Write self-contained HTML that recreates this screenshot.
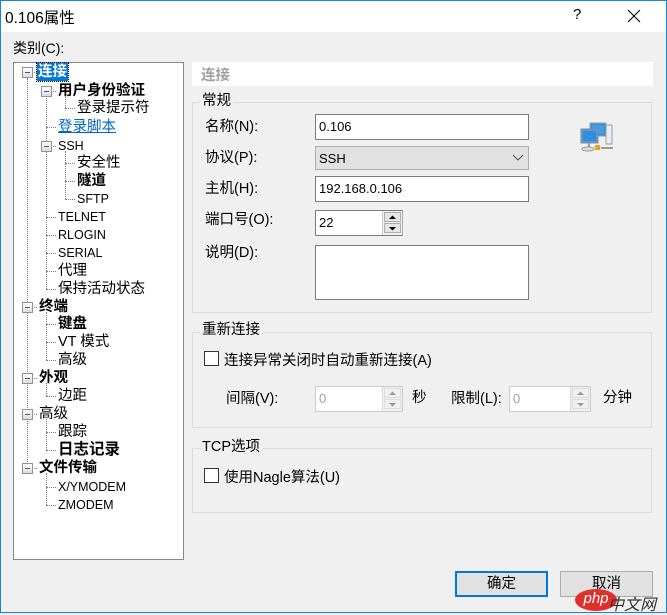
<!DOCTYPE html>
<html><head><meta charset="utf-8"><style>
*{margin:0;padding:0;box-sizing:border-box}
body{width:667px;height:613px;overflow:hidden;background:#f0f0f0;font-family:"Liberation Sans","Noto Sans CJK SC",sans-serif;font-size:14.5px;color:#000;position:relative}
.a{position:absolute;white-space:nowrap}
.t{position:absolute;white-space:nowrap;line-height:18px;height:18px}
.b{font-weight:bold}
.vl{position:absolute;width:0;border-left:1px dotted #808080}
.hl{position:absolute;height:0;border-top:1px dotted #808080}
.box{position:absolute;width:11px;height:11px;border:1px solid #919191;background:linear-gradient(#fff,#dcdcdc)}
.box:after{content:"";position:absolute;left:2px;top:4px;width:5px;height:1px;background:#3a5a9a}
.inp{position:absolute;background:#fff;border:1px solid #7a7a7a;font-size:13px}
.grp{position:absolute;border:1px solid #dcdcdc}
.lbl{position:absolute;background:#f0f0f0;padding:0 2px;line-height:16px}
.chk{position:absolute;width:15px;height:15px;border:1px solid #333;background:#fff}
.spin{position:absolute;background:#f0f0f0}
.l{font-size:12.5px}
</style></head><body>
<div class="a" style="left:0;top:0;width:667px;height:32px;background:#fff"></div>
<div class="a" style="left:0;top:0;width:667px;height:613px;border:1px solid #1883d7"></div>
<div class="a" style="left:5px;top:6px;font-size:15.5px">0.106属性</div>
<div class="a" style="left:573px;top:6px;font-size:15px">?</div>
<svg class="a" style="left:627px;top:9px" width="14" height="14"><path d="M1 1L13 13M13 1L1 13" stroke="#000" stroke-width="1.1"/></svg>

<div class="a" style="left:13px;top:38px;font-size:14px">类别(C):</div>
<div class="a" style="left:13px;top:62px;width:171px;height:498px;background:#fff;border:1px solid #828790"></div>

<div class="vl" style="left:27px;top:78px;height:390px"></div>
<div class="vl" style="left:46px;top:96px;height:193px"></div>
<div class="vl" style="left:65px;top:96px;height:12px"></div>
<div class="vl" style="left:65px;top:151px;height:48px"></div>
<div class="vl" style="left:46px;top:312px;height:48px"></div>
<div class="vl" style="left:46px;top:383px;height:13px"></div>
<div class="vl" style="left:46px;top:419px;height:31px"></div>
<div class="vl" style="left:46px;top:473px;height:32px"></div>
<div class="hl" style="left:32px;top:72px;width:5px"></div>
<div class="hl" style="left:51px;top:91px;width:5px"></div>
<div class="hl" style="left:65px;top:108px;width:10px"></div>
<div class="hl" style="left:46px;top:127px;width:10px"></div>
<div class="hl" style="left:51px;top:146px;width:5px"></div>
<div class="hl" style="left:65px;top:163px;width:10px"></div>
<div class="hl" style="left:65px;top:181px;width:10px"></div>
<div class="hl" style="left:65px;top:199px;width:10px"></div>
<div class="hl" style="left:46px;top:217px;width:10px"></div>
<div class="hl" style="left:46px;top:235px;width:10px"></div>
<div class="hl" style="left:46px;top:253px;width:10px"></div>
<div class="hl" style="left:46px;top:271px;width:10px"></div>
<div class="hl" style="left:46px;top:289px;width:10px"></div>
<div class="hl" style="left:32px;top:307px;width:5px"></div>
<div class="hl" style="left:46px;top:324px;width:10px"></div>
<div class="hl" style="left:46px;top:342px;width:10px"></div>
<div class="hl" style="left:46px;top:360px;width:10px"></div>
<div class="hl" style="left:32px;top:378px;width:5px"></div>
<div class="hl" style="left:46px;top:396px;width:10px"></div>
<div class="hl" style="left:32px;top:414px;width:5px"></div>
<div class="hl" style="left:46px;top:432px;width:10px"></div>
<div class="hl" style="left:46px;top:450px;width:10px"></div>
<div class="hl" style="left:32px;top:468px;width:5px"></div>
<div class="hl" style="left:46px;top:487px;width:10px"></div>
<div class="hl" style="left:46px;top:505px;width:10px"></div>

<div class="box" style="left:22px;top:67px"></div>
<div class="box" style="left:41px;top:86px"></div>
<div class="box" style="left:41px;top:141px"></div>
<div class="box" style="left:22px;top:302px"></div>
<div class="box" style="left:22px;top:373px"></div>
<div class="box" style="left:22px;top:409px"></div>
<div class="box" style="left:22px;top:463px"></div>

<div class="t b" style="left:37px;top:63px;background:#0078d7;color:#fff;padding:0 1px;outline:1px dotted #000">连接</div>
<div class="t b" style="left:58px;top:82px">用户身份验证</div>
<div class="t" style="left:77px;top:99px">登录提示符</div>
<div class="t" style="left:58px;top:118px;color:#0066cc;text-decoration:underline">登录脚本</div>
<div class="t l" style="left:58px;top:137px">SSH</div>
<div class="t" style="left:77px;top:154px">安全性</div>
<div class="t b" style="left:77px;top:172px">隧道</div>
<div class="t l" style="left:77px;top:190px">SFTP</div>
<div class="t l" style="left:58px;top:208px">TELNET</div>
<div class="t l" style="left:58px;top:226px">RLOGIN</div>
<div class="t l" style="left:58px;top:244px">SERIAL</div>
<div class="t" style="left:58px;top:262px">代理</div>
<div class="t" style="left:58px;top:280px">保持活动状态</div>
<div class="t b" style="left:39px;top:298px">终端</div>
<div class="t b" style="left:58px;top:315px">键盘</div>
<div class="t" style="left:58px;top:333px">VT 模式</div>
<div class="t" style="left:58px;top:351px">高级</div>
<div class="t b" style="left:39px;top:369px">外观</div>
<div class="t" style="left:58px;top:387px">边距</div>
<div class="t" style="left:39px;top:405px">高级</div>
<div class="t" style="left:58px;top:423px">跟踪</div>
<div class="t b" style="left:58px;top:441px;font-size:15.5px">日志记录</div>
<div class="t b" style="left:39px;top:459px">文件传输</div>
<div class="t l" style="left:58px;top:478px">X/YMODEM</div>
<div class="t l" style="left:58px;top:496px">ZMODEM</div>

<div class="a" style="left:192px;top:62px;width:461px;height:24px;background:#fff"></div>
<div class="a b" style="left:201px;top:64px;color:#a0a0a0;font-size:14.5px">连接</div>

<div class="grp" style="left:192px;top:102px;width:460px;height:211px"></div>
<div class="lbl" style="left:200px;top:93px">常规</div>
<div class="a" style="left:205px;top:115px">名称(N):</div>
<div class="a" style="left:205px;top:146px">协议(P):</div>
<div class="a" style="left:205px;top:177px">主机(H):</div>
<div class="a" style="left:205px;top:208px">端口号(O):</div>
<div class="a" style="left:205px;top:241px">说明(D):</div>
<div class="inp" style="left:315px;top:114px;width:214px;height:26px;padding:4px 3px">0.106</div>
<div class="inp" style="left:315px;top:146px;width:214px;height:24px;background:#e1e1e1;border-color:#adadad;padding:4px 3px">SSH</div>
<svg class="a" style="left:512px;top:154px" width="12" height="8"><path d="M1 1L6 6L11 1" stroke="#555" fill="none"/></svg>
<div class="inp" style="left:315px;top:176px;width:214px;height:26px;padding:4px 3px">192.168.0.106</div>
<div class="inp" style="left:315px;top:210px;width:88px;height:26px;padding:4px 3px;border-right-color:#adadad">22</div>
<div class="spin" style="left:382px;top:211px;width:20px;height:24px;border-left:1px solid #ccc">
<div style="position:absolute;left:1px;top:1px;width:17px;height:10px;border:1px solid #adadad;background:#e5e5e5"></div>
<div style="position:absolute;left:1px;top:12px;width:17px;height:10px;border:1px solid #adadad;background:#e5e5e5"></div>
<svg style="position:absolute;left:5px;top:3px" width="9" height="18"><path d="M1 5L4.5 1.5L8 5Z M1 13L4.5 16.5L8 13Z" fill="#000"/></svg></div>
<div class="inp" style="left:315px;top:245px;width:214px;height:55px"></div>
<svg class="a" style="left:580px;top:122px" width="34" height="32">
<rect x="10" y="1" width="16" height="13" fill="#4a88c9" stroke="#8aa" /><rect x="12" y="3" width="12" height="9" fill="#3aa0e8"/>
<rect x="26" y="3" width="6" height="19" fill="#e8eef4" stroke="#99a"/>
<rect x="1" y="7" width="17" height="14" fill="#5a9ad8" stroke="#889"/><rect x="3" y="9" width="13" height="10" fill="#2f8ee0"/>
<path d="M5 27h4M9 21v5M21 26h12" stroke="#999" stroke-width="2"/><rect x="15" y="23" width="5" height="5" fill="#f0a020"/>
<ellipse cx="8" cy="27" rx="6" ry="2" fill="#ddd" stroke="#999"/></svg>

<div class="grp" style="left:192px;top:332px;width:460px;height:96px"></div>
<div class="lbl" style="left:200px;top:322px">重新连接</div>
<div class="chk" style="left:204px;top:351px"></div>
<div class="a" style="left:224px;top:349px">连接异常关闭时自动重新连接(A)</div>
<div class="a" style="left:226px;top:387px">间隔(V):</div>
<div class="inp" style="left:315px;top:386px;width:88px;height:26px;border-color:#ccc;padding:4px 3px;color:#a0a0a0">0</div>
<div class="spin" style="left:382px;top:387px;width:20px;height:24px;border-left:1px solid #ddd">
<div style="position:absolute;left:1px;top:1px;width:17px;height:10px;border:1px solid #ddd"></div>
<div style="position:absolute;left:1px;top:12px;width:17px;height:10px;border:1px solid #ddd"></div>
<svg style="position:absolute;left:5px;top:3px" width="9" height="18"><path d="M1 5L4.5 1.5L8 5Z M1 13L4.5 16.5L8 13Z" fill="#999"/></svg></div>
<div class="a" style="left:412px;top:386px">秒</div>
<div class="a" style="left:451px;top:387px">限制(L):</div>
<div class="inp" style="left:509px;top:386px;width:82px;height:26px;border-color:#ccc;padding:4px 3px;color:#a0a0a0">0</div>
<div class="spin" style="left:570px;top:387px;width:20px;height:24px;border-left:1px solid #ddd">
<div style="position:absolute;left:1px;top:1px;width:17px;height:10px;border:1px solid #ddd"></div>
<div style="position:absolute;left:1px;top:12px;width:17px;height:10px;border:1px solid #ddd"></div>
<svg style="position:absolute;left:5px;top:3px" width="9" height="18"><path d="M1 5L4.5 1.5L8 5Z M1 13L4.5 16.5L8 13Z" fill="#999"/></svg></div>
<div class="a" style="left:603px;top:386px">分钟</div>

<div class="grp" style="left:192px;top:448px;width:460px;height:65px"></div>
<div class="lbl" style="left:200px;top:439px">TCP选项</div>
<div class="chk" style="left:204px;top:468px"></div>
<div class="a" style="left:224px;top:466px">使用Nagle算法(U)</div>

<div class="a" style="left:455px;top:571px;width:93px;height:26px;border:2px solid #0078d7;background:#e1e1e1;text-align:center;line-height:22px">确定</div>
<div class="a" style="left:560px;top:571px;width:93px;height:26px;border:1px solid #adadad;background:#e1e1e1;text-align:center;line-height:24px">取消</div>
<div class="a" style="left:575px;top:589px;width:42px;height:22px;border-radius:50%;background:#e0302c;color:#fff;font-style:italic;font-size:15px;line-height:20px;text-align:center">php</div>
<div class="a" style="left:608px;top:591px;font-size:16px;color:#333;font-style:italic">中文网</div>
</body></html>
